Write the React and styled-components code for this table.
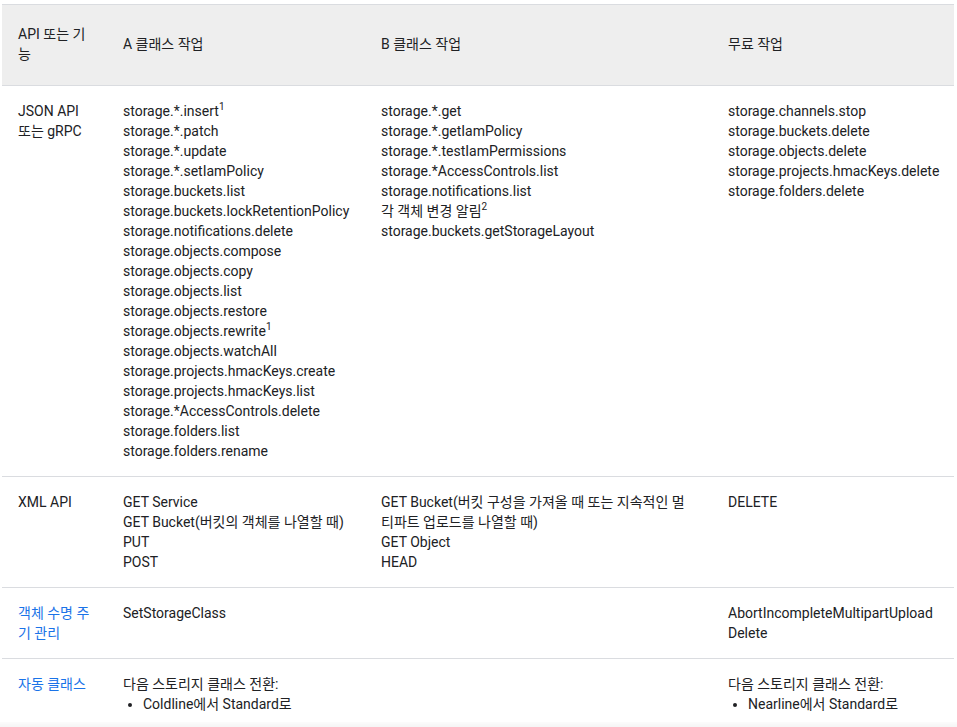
import React from "react";
import styled, { createGlobalStyle } from "styled-components";

const Global = createGlobalStyle`
  html, body { margin: 0; padding: 0; background: #fff; overflow: hidden; }
  body {
    font-family: Roboto, "Noto Sans CJK KR", "Noto Sans", sans-serif;
    font-size: 14px;
    line-height: 20px;
    color: #202124;
  }
`;

const Page = styled.div`
  padding: 4px 3px 0 2px;
  &::after {
    content: "";
    position: fixed;
    left: 0;
    right: 0;
    bottom: 0;
    height: 5px;
    background: linear-gradient(to bottom, rgba(0, 0, 0, 0.01), rgba(0, 0, 0, 0.04));
  }
`;

const Table = styled.table`
  width: 952px;
  border-collapse: collapse;
  table-layout: fixed;
  border-top: 1px solid #dadce0;
`;

const HeadCell = styled.th`
  background: #eeeeee;
  text-align: left;
  font-weight: 400;
  vertical-align: middle;
  padding: 19px 8px 21px 16px;
  border-bottom: 1px solid #dadce0;
`;

const Row = styled.tr`
  border-bottom: 1px solid #dadce0;
`;

const Cell = styled.td`
  vertical-align: top;
  padding: 15px 8px 15px 16px;
`;

const Label = styled.span`
  color: ${(p) => (p.$link ? "#1a73e8" : "#202124")};
  cursor: ${(p) => (p.$link ? "pointer" : "default")};
`;

const Line = styled.div`
  white-space: nowrap;
`;

const Sup = styled.sup`
  font-size: 10px;
  line-height: 0;
  vertical-align: 6px;
`;

const Bullets = styled.ul`
  margin: 0;
  padding-left: 20px;
  list-style: disc;
`;

const Lines = ({ items }) =>
  items.map((it, i) => (
    <Line key={i}>
      {typeof it === "string" ? it : (
        <>
          {it.t}
          <Sup>{it.s}</Sup>
        </>
      )}
    </Line>
  ));

const jsonA = [
  { t: "storage.*.insert", s: "1" },
  "storage.*.patch",
  "storage.*.update",
  "storage.*.setIamPolicy",
  "storage.buckets.list",
  "storage.buckets.lockRetentionPolicy",
  "storage.notifications.delete",
  "storage.objects.compose",
  "storage.objects.copy",
  "storage.objects.list",
  "storage.objects.restore",
  { t: "storage.objects.rewrite", s: "1" },
  "storage.objects.watchAll",
  "storage.projects.hmacKeys.create",
  "storage.projects.hmacKeys.list",
  "storage.*AccessControls.delete",
  "storage.folders.list",
  "storage.folders.rename",
];

const jsonB = [
  "storage.*.get",
  "storage.*.getIamPolicy",
  "storage.*.testIamPermissions",
  "storage.*AccessControls.list",
  "storage.notifications.list",
  { t: "각 객체 변경 알림", s: "2" },
  "storage.buckets.getStorageLayout",
];

const jsonFree = [
  "storage.channels.stop",
  "storage.buckets.delete",
  "storage.objects.delete",
  "storage.projects.hmacKeys.delete",
  "storage.folders.delete",
];

export default function App() {
  return (
    <>
      <Global />
      <Page>
        <Table>
          <colgroup>
            <col style={{ width: 105 }} />
            <col style={{ width: 258 }} />
            <col style={{ width: 347 }} />
            <col style={{ width: 242 }} />
          </colgroup>
          <thead>
            <tr>
              <HeadCell style={{ paddingRight: 16 }}>API 또는 기능</HeadCell>
              <HeadCell>A 클래스 작업</HeadCell>
              <HeadCell>B 클래스 작업</HeadCell>
              <HeadCell>무료 작업</HeadCell>
            </tr>
          </thead>
          <tbody>
            <Row>
              <Cell style={{ paddingRight: 16 }}>
                <Label>JSON API 또는 gRPC</Label>
              </Cell>
              <Cell><Lines items={jsonA} /></Cell>
              <Cell><Lines items={jsonB} /></Cell>
              <Cell><Lines items={jsonFree} /></Cell>
            </Row>
            <Row>
              <Cell style={{ paddingRight: 16 }}>
                <Label>XML API</Label>
              </Cell>
              <Cell>
                <Lines items={["GET Service", "GET Bucket(버킷의 객체를 나열할 때)", "PUT", "POST"]} />
              </Cell>
              <Cell>
                <Lines
                  items={[
                    "GET Bucket(버킷 구성을 가져올 때 또는 지속적인 멀",
                    "티파트 업로드를 나열할 때)",
                    "GET Object",
                    "HEAD",
                  ]}
                />
              </Cell>
              <Cell><Lines items={["DELETE"]} /></Cell>
            </Row>
            <Row>
              <Cell style={{ paddingRight: 16 }}>
                <Label $link>객체 수명 주기 관리</Label>
              </Cell>
              <Cell><Lines items={["SetStorageClass"]} /></Cell>
              <Cell />
              <Cell><Lines items={["AbortIncompleteMultipartUpload", "Delete"]} /></Cell>
            </Row>
            <Row>
              <Cell style={{ paddingRight: 16 }}>
                <Label $link>자동 클래스</Label>
              </Cell>
              <Cell>
                <Line>다음 스토리지 클래스 전환:</Line>
                <Bullets>
                  <li>Coldline에서 Standard로</li>
                </Bullets>
              </Cell>
              <Cell />
              <Cell>
                <Line>다음 스토리지 클래스 전환:</Line>
                <Bullets>
                  <li>Nearline에서 Standard로</li>
                </Bullets>
              </Cell>
            </Row>
          </tbody>
        </Table>
      </Page>
    </>
  );
}
